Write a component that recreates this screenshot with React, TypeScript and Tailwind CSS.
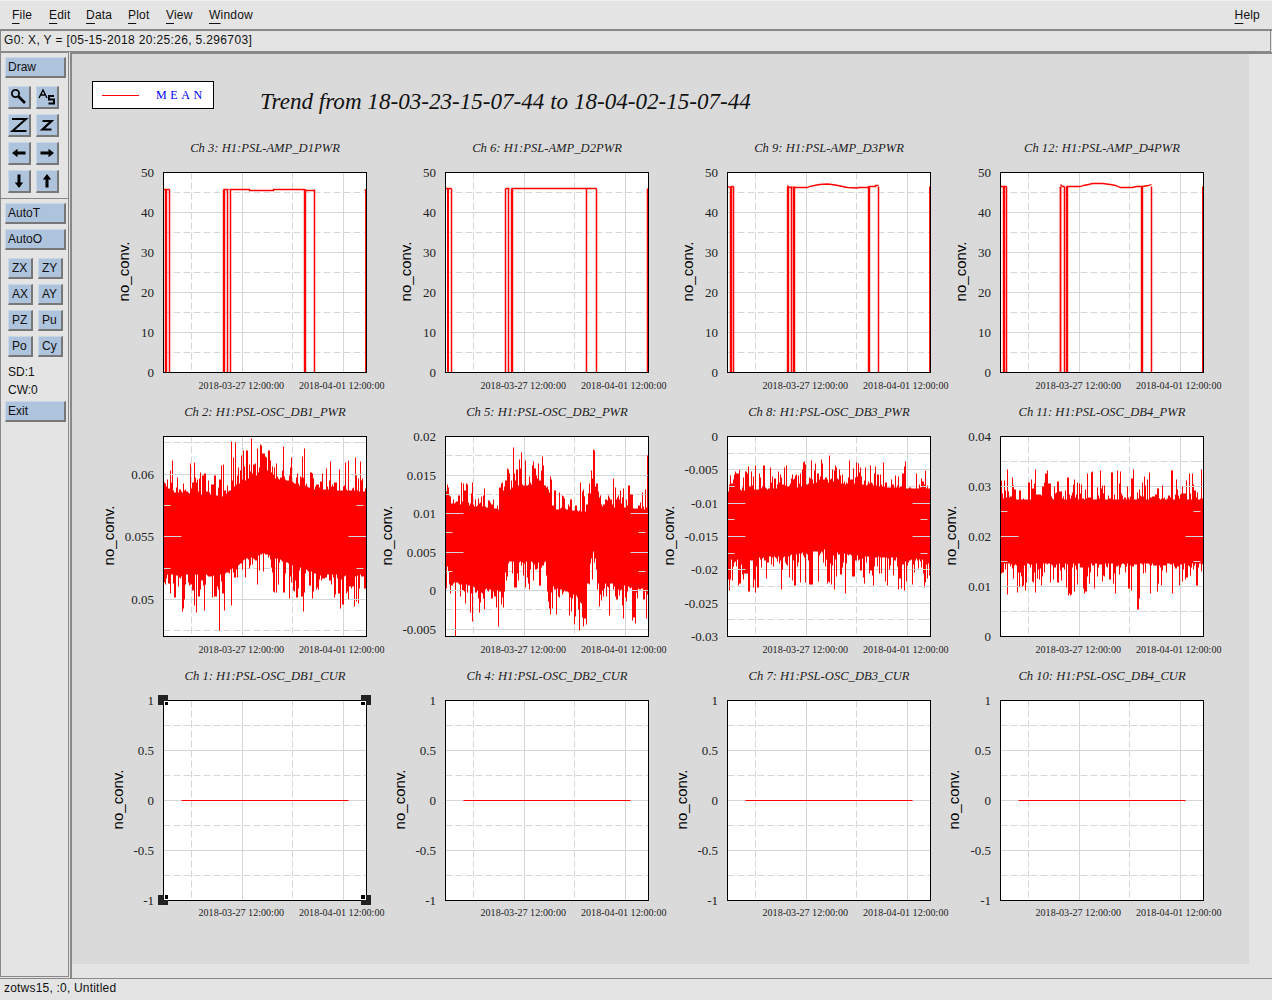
import React from "react";

type Step = { v: [number, number][]; top: [number, number][][] };
type Noise = {
  seed: number;
  up: [number, number][];
  lo: [number, number][];
  upSpike: number;
  loSpike: number;
  extra: [number, number][];
};
type PlotDef = {
  title: string;
  yLabelX: number;
  ticks: [string, number][];
  dashes: number[];
  step?: Step;
  noise?: Noise;
  flat?: boolean;
  handles?: boolean;
};

const mk = (labels: string[]): [string, number][] =>
  labels.map((l, i) => [l, (200 * i) / (labels.length - 1)]);

function interp(p: [number, number][], x: number) {
  for (let i = 0; i < p.length - 1; i++) {
    if (x >= p[i][0] && x <= p[i + 1][0]) {
      const t = (x - p[i][0]) / (p[i + 1][0] - p[i][0]);
      return p[i][1] + t * (p[i + 1][1] - p[i][1]);
    }
  }
  return p[p.length - 1][1];
}

function rng(seed: number) {
  let a = seed;
  return () => {
    a = (a + 0x6d2b79f5) | 0;
    let t = Math.imul(a ^ (a >>> 15), 1 | a);
    t = (t + Math.imul(t ^ (t >>> 7), 61 | t)) ^ t;
    return ((t ^ (t >>> 14)) >>> 0) / 4294967296;
  };
}

function noisePath(n: Noise) {
  const r = rng(n.seed);
  let d = "";
  let prevU = 0;
  let prevL = 0;
  for (let x = 0; x < 203; x++) {
    if (x === 0 || r() > 0.15) prevU = Math.pow(r(), 2.6) * (n.upSpike + 12) - 5;
    if (x === 0 || r() > 0.15) prevL = Math.pow(r(), 2.6) * (n.loSpike + 12) - 5;
    let top = Math.max(0, interp(n.up, x) - prevU);
    let bot = Math.min(200, interp(n.lo, x) + prevL);
    for (const [ex, ey] of n.extra) {
      if (ex === x) {
        if (ey < 100) top = ey;
        else bot = ey;
      }
    }
    d += `M${x} ${Math.round(top)}V${Math.round(bot)}`;
  }
  return d;
}

const ampA: Step = {
  v: [[2.5, 2.4], [6, 1.5], [60.5, 2.4], [64, 1.5], [67, 1.5], [141.5, 2.4], [151, 1.5], [202.5, 1.8]],
  top: [[[0, 17], [6, 17]], [[60, 17], [65, 17]], [[66, 17], [86, 17], [86, 18], [110, 18], [110, 17], [141, 17], [141, 18], [151, 18]], [[201, 18], [203, 17]]],
};
const ampB: Step = {
  v: [[2.5, 2], [6, 1.5], [60, 1.5], [63, 1.5], [66.5, 2.4], [141, 1.5], [151, 1.5], [202, 1.5]],
  top: [[[0, 16], [6, 16]], [[60, 16], [64, 16]], [[66, 16], [151, 16]]],
};
const ampC: Step = {
  v: [[3.5, 2.4], [6, 1.5], [60.5, 2.4], [64, 1.5], [66.5, 2.4], [141.5, 2.4], [151, 1.5], [202.5, 1.8]],
  top: [
    [[0, 14], [3, 15], [4, 15], [4, 14], [6, 14]],
    [[60, 13], [62, 15], [65, 15]],
    [[66, 15], [80, 15], [82, 14], [87, 13], [92, 12], [100, 11.5], [108, 12.5], [115, 14], [120, 15], [130, 15.5], [131, 15], [140, 15], [142, 14], [148, 14], [148, 13], [151, 13]],
  ],
};
const ampD: Step = {
  v: [[3.5, 2.4], [6, 1.5], [60, 1.8], [64, 1.5], [66.5, 2.4], [141.5, 2.4], [151, 1.5], [202.5, 2]],
  top: [
    [[0, 14], [6, 14]],
    [[60, 12], [62, 14], [64, 14]],
    [[66, 14], [80, 14], [83, 13], [88, 12], [92, 11], [102, 11], [110, 12], [115, 13], [120, 15], [132, 15], [136, 14], [142, 14], [148, 13], [151, 12]],
  ],
};

const t50 = mk(["50", "40", "30", "20", "10", "0"]);
const t1 = mk(["1", "0.5", "0", "-0.5", "-1"]);

const rows: PlotDef[][] = [
  [
    { title: "Ch 3: H1:PSL-AMP_D1PWR", yLabelX: -39.5, ticks: t50, dashes: [20, 60, 100, 140, 180], step: ampA },
    { title: "Ch 6: H1:PSL-AMP_D2PWR", yLabelX: -40, ticks: t50, dashes: [20, 60, 100, 140, 180], step: ampB },
    { title: "Ch 9: H1:PSL-AMP_D3PWR", yLabelX: -40, ticks: t50, dashes: [20, 60, 100, 140, 180], step: ampC },
    { title: "Ch 12: H1:PSL-AMP_D4PWR", yLabelX: -40, ticks: t50, dashes: [20, 60, 100, 140, 180], step: ampD },
  ],
  [
    {
      title: "Ch 2: H1:PSL-OSC_DB1_PWR",
      yLabelX: -55,
      ticks: [["0.06", 38], ["0.055", 100], ["0.05", 163]],
      dashes: [6, 69, 132, 194],
      noise: {
        seed: 11,
        up: [[0, 50], [60, 55], [72, 44], [95, 33], [125, 40], [150, 48], [203, 50]],
        lo: [[0, 143], [60, 143], [80, 128], [100, 122], [135, 135], [155, 143], [203, 143]],
        upSpike: 22,
        loSpike: 26,
        extra: [[88, 2], [68, 5], [56, 194], [19, 175], [20, 172], [33, 176], [72, 6], [120, 10], [141, 12], [140, 175]],
      },
    },
    {
      title: "Ch 5: H1:PSL-OSC_DB2_PWR",
      yLabelX: -59,
      ticks: [["0.02", 0], ["0.015", 38.5], ["0.01", 77], ["0.005", 115.5], ["0", 154], ["-0.005", 192.5]],
      dashes: [19, 58, 96, 135, 173],
      noise: {
        seed: 22,
        up: [[0, 48], [5, 62], [55, 68], [62, 50], [70, 44], [100, 44], [107, 68], [140, 70], [147, 46], [152, 46], [155, 65], [203, 68]],
        lo: [[0, 125], [5, 150], [55, 160], [62, 130], [100, 130], [107, 155], [140, 165], [147, 118], [150, 125], [152, 150], [203, 158]],
        upSpike: 18,
        loSpike: 24,
        extra: [[0, 20], [10, 200], [68, 11], [76, 16], [148, 13], [149, 14], [53, 190], [138, 190], [202, 19], [34, 176], [130, 180]],
      },
    },
    {
      title: "Ch 8: H1:PSL-OSC_DB3_PWR",
      yLabelX: -59,
      ticks: [["0", 0], ["-0.005", 33.3], ["-0.01", 66.7], ["-0.015", 100], ["-0.02", 133.3], ["-0.025", 166.7], ["-0.03", 200]],
      dashes: [16.7, 50, 83.3, 116.7, 150, 183.3],
      noise: {
        seed: 33,
        up: [[0, 50], [70, 46], [95, 40], [130, 44], [203, 48]],
        lo: [[0, 128], [60, 124], [95, 118], [130, 124], [203, 128]],
        upSpike: 15,
        loSpike: 22,
        extra: [[94, 23], [131, 27], [148, 30], [28, 156], [118, 157], [107, 153], [174, 152], [54, 153], [51, 35]],
      },
    },
    {
      title: "Ch 11: H1:PSL-OSC_DB4_PWR",
      yLabelX: -50,
      ticks: [["0.04", 0], ["0.03", 50], ["0.02", 100], ["0.01", 150], ["0", 200]],
      dashes: [25, 75, 125, 175],
      noise: {
        seed: 44,
        up: [[0, 58], [203, 58]],
        lo: [[0, 132], [203, 132]],
        upSpike: 18,
        loSpike: 20,
        extra: [[137, 173], [138, 173], [139, 162], [69, 157], [74, 155], [84, 157], [35, 156], [47, 34], [100, 34], [133, 33], [201, 33]],
      },
    },
  ],
  [
    { title: "Ch 1: H1:PSL-OSC_DB1_CUR", yLabelX: -46, ticks: t1, dashes: [25, 75, 125, 175], flat: true, handles: true },
    { title: "Ch 4: H1:PSL-OSC_DB2_CUR", yLabelX: -46, ticks: t1, dashes: [25, 75, 125, 175], flat: true },
    { title: "Ch 7: H1:PSL-OSC_DB3_CUR", yLabelX: -46, ticks: t1, dashes: [25, 75, 125, 175], flat: true },
    { title: "Ch 10: H1:PSL-OSC_DB4_CUR", yLabelX: -47, ticks: t1, dashes: [25, 75, 125, 175], flat: true },
  ],
];

const GRID = "#d6d6d6";
const DASH = "7 3";

function Solid({ p, x1, x2 }: { p: PlotDef; x1: number; x2: number }) {
  return (
    <>
      {p.ticks.map(([, y], i) => (
        <line key={i} x1={x1} x2={x2} y1={Math.round(y)} y2={Math.round(y)} stroke={GRID} strokeWidth={1} />
      ))}
    </>
  );
}
function Dashed({ p, x1, x2 }: { p: PlotDef; x1: number; x2: number }) {
  return (
    <>
      {p.dashes.map((y, i) => (
        <line key={i} x1={x1} x2={x2} y1={Math.round(y)} y2={Math.round(y)} stroke={GRID} strokeWidth={1} strokeDasharray={DASH} />
      ))}
    </>
  );
}

function Handle({ x, y, sx, sy }: { x: number; y: number; sx: number; sy: number }) {
  const wx = sx > 0 ? x + 0.5 : x - 5.5;
  const wy = sy > 0 ? y + 0.5 : y - 5.5;
  const bx = sx > 0 ? x + 1.5 : x - 5.5;
  const by = sy > 0 ? y + 1.5 : y - 5.5;
  const ww = sx > 0 ? 4 : 5;
  const wh = sy > 0 ? 4 : 5;
  const bw = sx > 0 ? 3 : 4;
  const bh = sy > 0 ? 3 : 4;
  return (
    <g>
      <rect x={x - 5.5} y={y - 5.5} width={10} height={10} fill="#222" />
      <rect x={wx} y={wy} width={ww} height={wh} fill="#fff" />
      <rect x={bx} y={by} width={bw} height={bh} fill="#000" />
    </g>
  );
}

function Plot({ p, clipId }: { p: PlotDef; clipId: string }) {
  const fx = 72.5;
  const fy = 32.5;
  const dateY = p.flat ? fy + 215.5 : fy + 216.5;
  return (
    <svg width={300} height={264} className="block overflow-visible">
      <text x={fx + 101.5} y={12} textAnchor="middle" className="font-['Liberation_Serif',serif] text-[12.6px] italic fill-[#222]">
        {p.title}
      </text>
      <text
        transform={`translate(${fx + p.yLabelX + 5},${fy + 99}) rotate(-90)`}
        textAnchor="middle"
        className="font-['Liberation_Sans',sans-serif] text-[15px] fill-black"
      >
        no_conv.
      </text>
      {p.ticks.map(([l, y]) => (
        <text key={l} x={fx - 9.5} y={fy + y + 4.5} textAnchor="end" className="font-['Liberation_Serif',serif] text-[13px] fill-[#222]">
          {l}
        </text>
      ))}
      <text x={fx + 35} y={dateY} className="font-['Liberation_Serif',serif] text-[10.1px] fill-[#222]">
        2018-03-27 12:00:00
      </text>
      <text x={fx + 135.5} y={dateY} className="font-['Liberation_Serif',serif] text-[10.1px] fill-[#222]">
        2018-04-01 12:00:00
      </text>
      <g transform={`translate(${fx},${fy})`}>
        <clipPath id={clipId}>
          <rect x={0} y={0} width={203} height={200} />
        </clipPath>
        <rect x={0} y={0} width={203} height={200} fill="#fff" />
        <Solid p={p} x1={0} x2={203} />
        <Dashed p={p} x1={0} x2={203} />
        <line x1={28} x2={28} y1={0} y2={200} stroke={GRID} strokeDasharray={DASH} />
        <line x1={79} x2={79} y1={0} y2={200} stroke={GRID} />
        <line x1={129} x2={129} y1={0} y2={200} stroke={GRID} strokeDasharray={DASH} />
        <line x1={180} x2={180} y1={0} y2={200} stroke={GRID} />
        <g clipPath={`url(#${clipId})`}>
          {p.step && (
            <>
              {p.step.v.map(([x, w], i) => (
                <line key={i} x1={x} x2={x} y1={p.step!.top[0][0][1]} y2={200} stroke="#f00" strokeWidth={w} />
              ))}
              {p.step.top.map((s, i) => (
                <polyline key={i} points={s.map((q) => q.join(",")).join(" ")} fill="none" stroke="#f00" strokeWidth={1.3} />
              ))}
            </>
          )}
          {p.noise && (
            <>
              <path d={noisePath(p.noise)} stroke="#f00" strokeWidth={1} fill="none" />
              <Solid p={p} x1={0} x2={18} />
              <Solid p={p} x1={185} x2={203} />
              <Dashed p={p} x1={0} x2={10} />
              <Dashed p={p} x1={193} x2={203} />
            </>
          )}
          {p.flat && <line x1={18} x2={185} y1={100} y2={100} stroke="#f00" strokeWidth={1} />}
        </g>
        <rect x={0} y={0} width={203} height={200} fill="none" stroke="#000" strokeWidth={1} />
        {p.handles && (
          <>
            <Handle x={0} y={0} sx={1} sy={1} />
            <Handle x={203} y={0} sx={-1} sy={1} />
            <Handle x={0} y={200} sx={1} sy={-1} />
            <Handle x={203} y={200} sx={-1} sy={-1} />
          </>
        )}
      </g>
    </svg>
  );
}

function Menu({ first, rest, className }: { first: string; rest: string; className?: string }) {
  return (
    <span className={className}>
      <span className="underline underline-offset-[4px]">{first}</span>
      {rest}
    </span>
  );
}

const btn =
  "bg-[#aec3dc] border-t border-l border-t-[#c9d6e6] border-l-[#c9d6e6] border-b-2 border-r-2 border-b-[#777] border-r-[#777] box-border text-[12px] text-[#111]";

function WideBtn({ label, className = "" }: { label: string; className?: string }) {
  return <div className={`${btn} w-[61px] h-[21px] pl-[2px] leading-[18px] ${className}`}>{label}</div>;
}
function TxtBtn({ label }: { label: string }) {
  return <div className={`${btn} w-[25px] h-[21px] pl-[3px] leading-[18px]`}>{label}</div>;
}
function IconBtn({ children }: { children: React.ReactNode }) {
  return (
    <div className={`${btn} w-[23px] h-[23px] flex items-center justify-center`}>
      <svg width={20} height={20} viewBox="0 0 20 20">
        {children}
      </svg>
    </div>
  );
}

const arrow = (rot: number) => (
  <path d="M3 10 L8.5 5.8 V8.5 H16.5 V11.5 H8.5 V14.2 Z" fill="#000" transform={`rotate(${rot} 10 10)`} />
);

export default function App() {
  return (
    <div className="w-[1272px] h-[1000px] bg-[#e4e4e4] flex flex-col overflow-hidden font-['Liberation_Sans',sans-serif] text-[12px] text-[#111] box-border">
      <div className="h-[31px] shrink-0 border-b-2 border-[#888] border-t border-t-[#f0f0f0] flex items-center justify-between pl-[12px] pr-[12px] tracking-[0.2px] leading-[27px]">
        <div className="flex">
          <Menu first="F" rest="ile" className="w-[37px]" />
          <Menu first="E" rest="dit" className="w-[37px]" />
          <Menu first="D" rest="ata" className="w-[42px]" />
          <Menu first="P" rest="lot" className="w-[38px]" />
          <Menu first="V" rest="iew" className="w-[43px]" />
          <Menu first="W" rest="indow" />
        </div>
        <Menu first="H" rest="elp" />
      </div>
      <div className="h-[21px] shrink-0 w-[1271px] box-border border-b border-r border-l border-[#888] pl-[3px] leading-[19px] tracking-[0.35px]">
        G0: X, Y = [05-15-2018 20:25:26, 5.296703]
      </div>
      <div className="h-[926px] shrink-0 flex">
        <div className="w-[69px] h-[925px] box-border border border-[#888] pl-[4px] pt-[4px] flex flex-col shrink-0">
          <WideBtn label="Draw" />
          <div className="mt-[8px] pl-[3px] grid grid-cols-[23px_23px] gap-x-[5px] gap-y-[5px]">
            <IconBtn>
              <circle cx="6.5" cy="6.5" r="3.6" fill="none" stroke="#000" strokeWidth="1.8" />
              <path d="M9.5 9.5 L16 16" stroke="#000" strokeWidth="2.6" />
            </IconBtn>
            <IconBtn>
              <path d="M2 11 L6 3 L10 11 M3.6 8 H8.4" fill="none" stroke="#000" strokeWidth="1.4" />
              <path d="M17 9 H12 V12.5 H17 V16.5 H11.5" fill="none" stroke="#000" strokeWidth="2" />
            </IconBtn>
            <IconBtn>
              <path d="M3 4 H17 L3.5 16 H17.5" fill="none" stroke="#000" strokeWidth="2" />
            </IconBtn>
            <IconBtn>
              <path d="M5.5 6 H14.5 L5.5 14.5 H14.5" fill="none" stroke="#000" strokeWidth="2.2" />
            </IconBtn>
            <IconBtn>{arrow(0)}</IconBtn>
            <IconBtn>{arrow(180)}</IconBtn>
            <IconBtn>{arrow(270)}</IconBtn>
            <IconBtn>{arrow(90)}</IconBtn>
          </div>
          <div className="-ml-[4px] w-[67px] border-t border-[#888] mt-[5px]" />
          <WideBtn label="AutoT" className="mt-[4px]" />
          <WideBtn label="AutoO" className="mt-[5px]" />
          <div className="mt-[8px] pl-[3px] grid grid-cols-[25px_25px] gap-x-[5px] gap-y-[5px]">
            {["ZX", "ZY", "AX", "AY", "PZ", "Pu", "Po", "Cy"].map((l) => (
              <TxtBtn key={l} label={l} />
            ))}
          </div>
          <div className="pl-[3px] mt-[6px] leading-[18px] h-[18px]">SD:1</div>
          <div className="pl-[3px] leading-[18px] h-[18px]">CW:0</div>
          <WideBtn label="Exit" className="mt-[2px]" />
        </div>
        <div className="flex-1 ml-px border-t-2 border-l-2 border-[#888]">
          <div className="w-[1177px] h-[910px] bg-[#dadada]">
            <div className="h-[86px] flex items-start pl-[20px]">
              <div className="mt-[27px] w-[122px] h-[28px] bg-white border border-black flex items-center pl-[9px] box-border">
                <div className="w-[37px] h-px bg-[#f00]" />
                <span className="ml-[17px] font-['Liberation_Serif',serif] text-[12px] text-[#00f] tracking-[3.6px]">MEAN</span>
              </div>
              <div className="ml-[46px] mt-[33px] font-['Liberation_Serif',serif] italic text-[23.1px] leading-[28px] text-[#111] whitespace-nowrap">
                Trend from 18-03-23-15-07-44 to 18-04-02-15-07-44
              </div>
            </div>
            <div className="pl-[19px] flex flex-col">
              {rows.map((row, ri) => (
                <div key={ri} className="h-[264px] grid grid-cols-[282px_282px_273px_240px]">
                  {row.map((p, ci) => (
                    <Plot key={ci} p={p} clipId={`clip-${ri}-${ci}`} />
                  ))}
                </div>
              ))}
            </div>
          </div>
        </div>
      </div>
      <div className="border-t border-[#888] pl-[4px] h-[21px] leading-[19px] tracking-[0.2px] shrink-0">zotws15, :0, Untitled</div>
    </div>
  );
}
